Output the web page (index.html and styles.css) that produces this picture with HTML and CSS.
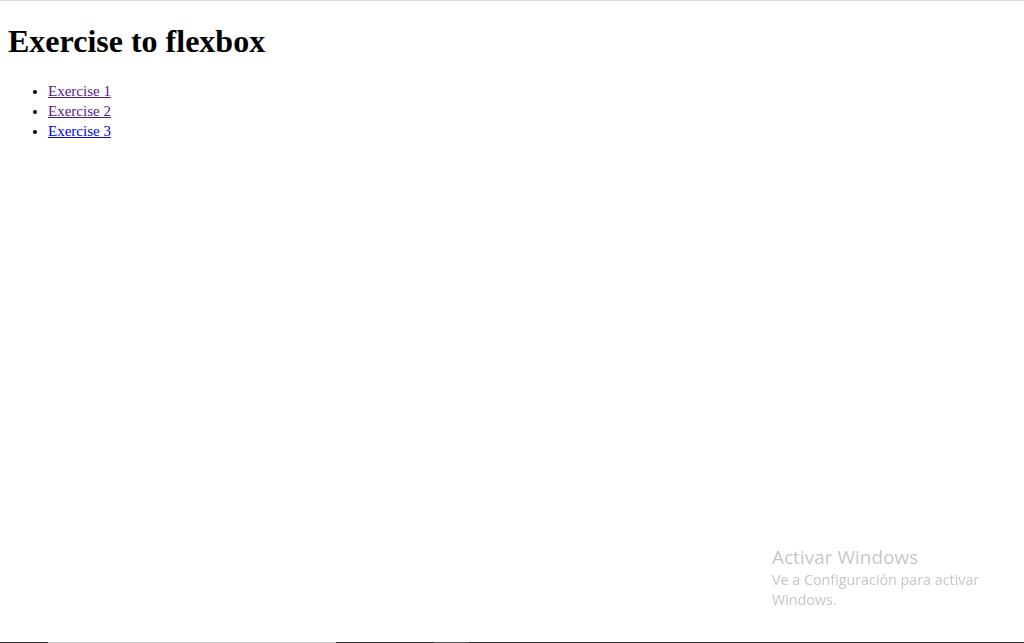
FILE: index.html
```html
<!DOCTYPE html>
<html lang="es">
<head>
<meta charset="utf-8">
<title>Exercise to flexbox</title>
<link rel="stylesheet" href="styles.css">
</head>
<body>
<div class="topline"></div>
<h1 class="title">Exercise to flexbox</h1>
<ul class="list">
  <li><a class="link visited" href="#ex1">Exercise 1</a></li>
  <li><a class="link visited" href="#ex2">Exercise 2</a></li>
  <li><a class="link" href="#ex3">Exercise 3</a></li>
</ul>
<div class="watermark">
  <div class="wm-title">Activar Windows</div>
  <div class="wm-sub">Ve a Configuración para activar<br>Windows.</div>
</div>
<div class="taskbar">
  <span class="seg dark s1"></span>
  <span class="seg light s2"></span>
  <span class="seg dark s3"></span>
  <span class="seg mid s4"></span>
  <span class="seg dark s5"></span>
</div>
</body>
</html>
```
FILE: styles.css
```css
html, body {
  background: #ffffff;
}
body {
  margin: 8px;
  font-family: "Liberation Serif", "Times New Roman", serif;
  color: #000;
}
.topline {
  position: fixed;
  top: 0;
  left: 0;
  right: 0;
  height: 1px;
  background: #dcdcdc;
}
.title {
  font-size: 32px;
  font-weight: bold;
  margin: 15px 0 21px;
}
.list {
  margin: 16px 0;
  padding-left: 40px;
  font-size: 15px;
  line-height: 20px;
}
.link {
  color: #0000ee;
  text-decoration: underline;
}
.link.visited {
  color: #551a8b;
}
.watermark {
  position: fixed;
  left: 772px;
  top: 544px;
  font-family: "Open Sans", "Noto Sans", sans-serif;
  color: #c6c6c6;
}
.wm-title {
  font-size: 19px;
  line-height: 26px;
}
.wm-sub {
  font-size: 14.3px;
  line-height: 20px;
}
.taskbar {
  position: fixed;
  left: 0;
  right: 0;
  bottom: 0;
  height: 1px;
  display: flex;
}
.seg {
  display: block;
  height: 1px;
}
.dark { background: #2b2b2b; }
.light { background: #c4c4c4; }
.mid { background: #555555; }
.s1 { width: 48px; }
.s2 { width: 288px; }
.s3 { width: 98px; }
.s4 { width: 35px; }
.s5 { flex: 1; }
```
